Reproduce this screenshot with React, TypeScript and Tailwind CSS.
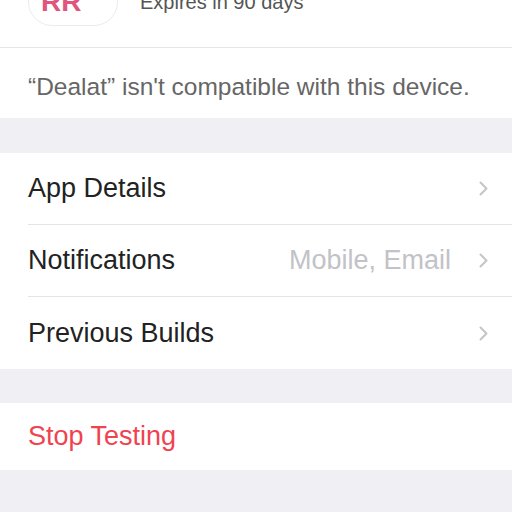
import React from "react";

function Chevron() {
  return (
    <svg width="9" height="15" viewBox="0 0 9 15" fill="none" className="shrink-0">
      <path d="M1.5 1.5l6 6-6 6" stroke="#c4c4c9" strokeWidth="2" strokeLinecap="round" strokeLinejoin="round" />
    </svg>
  );
}

function Row({ label, value, last }: { label: string; value?: string; last?: boolean }) {
  return (
    <div className="pl-[28px]">
      <div className={`h-[72px] flex items-center pr-[24px] ${last ? "" : "border-b border-[#e3e3e8]"}`}>
        <span className="text-[27px] text-[#222] flex-1">{label}</span>
        {value && <span className="text-[27px] text-[#c2c2c7] mr-[28px]">{value}</span>}
        <Chevron />
      </div>
    </div>
  );
}

export default function App() {
  return (
    <div className="w-[512px] h-[512px] overflow-hidden bg-[#f0eff4] font-['Liberation_Sans',Arial,sans-serif]">
      {/* App header (cut off at top) */}
      <div className="bg-white h-[48px] border-b border-[#e6e6ea] relative overflow-hidden">
        <div className="flex items-start gap-[22px] pl-[28px] -mt-[22px]">
          <div className="w-[90px] h-[48px] rounded-full border border-[#ececf0] flex items-center pl-[12px]">
            <span className="text-[28px] font-bold text-[#e0557e]">RR</span>
          </div>
          <span className="text-[20px] leading-[48px] text-[#555]">Expires in 90 days</span>
        </div>
      </div>
      <div className="bg-white h-[70px] flex items-center pl-[28px] pt-[8px]">
        <span className="text-[24.5px] text-[#666] whitespace-nowrap">“Dealat” isn't compatible with this device.</span>
      </div>

      <div className="h-[35px]" />

      <div className="bg-white">
        <Row label="App Details" />
        <Row label="Notifications" value="Mobile, Email" />
        <Row label="Previous Builds" last />
      </div>

      <div className="h-[34px]" />

      <div className="bg-white h-[67px] flex items-center pl-[28px]">
        <span className="text-[27px] text-[#f0434f]">Stop Testing</span>
      </div>
    </div>
  );
}
